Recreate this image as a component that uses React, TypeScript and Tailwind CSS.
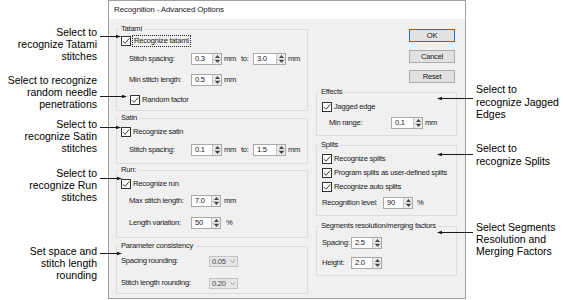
import React from 'react';

type Kids = { children?: React.ReactNode; className?: string };

function Row({ children, className = '' }: Kids) {
  return <div className={`flex items-center h-[14px] ${className}`}>{children}</div>;
}

function Group({ title, children, className = '' }: Kids & { title: string }) {
  return (
    <fieldset className={`border border-[#dcdcdc] ${className}`}>
      <legend className="ml-[2px] px-[2px] leading-[10px]">{title}</legend>
      {children}
    </fieldset>
  );
}

function Check({ label, focus }: { label: string; focus?: boolean }) {
  return (
    <div className="flex items-center">
      <span className="w-[10px] h-[10px] border border-[#333] bg-white flex items-center justify-center">
        <svg width="8" height="8" viewBox="0 0 8 8">
          <path d="M1 4.2 L3.1 6.3 L7.2 1.4" stroke="#222" strokeWidth="0.9" fill="none" />
        </svg>
      </span>
      {focus ? (
        <span className="ml-[1px] px-[1px] leading-[10px] border border-dotted border-[#222]">{label}</span>
      ) : (
        <span className="ml-[2px]">{label}</span>
      )}
    </div>
  );
}

function SpinBox({ value, className = '' }: { value: string; className?: string }) {
  return (
    <div className={`flex h-[12px] border border-[#a9a9a9] bg-white ${className}`}>
      <span className="flex-1 pl-[3px] leading-[10px]">{value}</span>
      <div className="flex flex-col w-[9px] border-l border-[#c4c4c4] bg-[#ebebeb]">
        <div className="flex-1 flex items-center justify-center border-b border-[#c4c4c4]">
          <svg width="5" height="3" viewBox="0 0 5 3">
            <path d="M0 3 L2.5 0 L5 3 Z" fill="#444" />
          </svg>
        </div>
        <div className="flex-1 flex items-center justify-center">
          <svg width="5" height="3" viewBox="0 0 5 3">
            <path d="M0 0 L2.5 3 L5 0 Z" fill="#444" />
          </svg>
        </div>
      </div>
    </div>
  );
}

function Combo({ value }: { value: string }) {
  return (
    <div className="flex items-center justify-between w-[29px] h-[11px] border border-[#c2c2c2] bg-[#e6e6e6] pl-[2px] pr-[2px] text-[#444] leading-[9px]">
      <span>{value}</span>
      <svg width="5" height="3" viewBox="0 0 5 3">
        <path d="M0.3 0.3 L2.5 2.6 L4.7 0.3" stroke="#888" strokeWidth="0.8" fill="none" />
      </svg>
    </div>
  );
}

function Btn({ label, primary, className = '' }: { label: string; primary?: boolean; className?: string }) {
  return (
    <div
      className={`w-[46px] h-[13px] flex items-center justify-center bg-[#e1e1e1] border ${
        primary ? 'border-[#0078d7]' : 'border-[#adadad]'
      } ${className}`}
    >
      {label}
    </div>
  );
}

const arrows = [
  { x1: 100, x2: 121, y: 36 },
  { x1: 100, x2: 127, y: 96 },
  { x1: 100, x2: 121, y: 127 },
  { x1: 100, x2: 122, y: 178 },
  { x1: 100, x2: 122, y: 253 },
  { x1: 473, x2: 437, y: 98 },
  { x1: 473, x2: 437, y: 154 },
  { x1: 473, x2: 437, y: 232 },
];

export default function App() {
  return (
    <div className="relative w-[563px] h-[300px] bg-white flex overflow-hidden font-['Liberation_Sans',Arial,sans-serif] text-black">
      {/* left callouts */}
      <div className="w-[108px] flex flex-col items-end pr-[11px] pt-[26px] text-[10.5px] leading-[12px] text-right">
        <p>Select to<br />recognize Tatami<br />stitches</p>
        <p className="mt-[12px]">Select to recognize<br />random needle<br />penetrations</p>
        <p className="mt-[8px]">Select to<br />recognize Satin<br />stitches</p>
        <p className="mt-[13px]">Select to<br />recognize Run<br />stitches</p>
        <p className="mt-[42px]">Set space and<br />stitch length<br />rounding</p>
      </div>

      {/* dialog */}
      <div className="w-[358px] h-[299px] border border-[#a0a0a0] bg-[#f0f0f0] flex flex-col text-[7.6px] tracking-[-0.25px] text-[#1a1a1a]">
        <div className="h-[18px] bg-white flex items-center pl-[5px] text-[8px] tracking-[-0.15px]">
          Recognition - Advanced Options
        </div>
        <div className="flex pl-[7px] pr-[8px]">
          {/* left column */}
          <div className="w-[192px] flex flex-col pt-[5px]">
            <Group title="Tatami" className="pb-[3px]">
              <Row className="pl-[4px]">
                <Check label="Recognize tatami" focus />
              </Row>
              <Row className="mt-[4px] pl-[12px]">
                <span className="w-[62px]">Stitch spacing:</span>
                <SpinBox value="0.3" className="w-[31px]" />
                <span className="ml-[2px] w-[17px]">mm</span>
                <span className="w-[12px]">to:</span>
                <SpinBox value="3.0" className="w-[33px]" />
                <span className="ml-[2px]">mm</span>
              </Row>
              <Row className="mt-[7px] pl-[12px]">
                <span className="w-[62px]">Min stitch length:</span>
                <SpinBox value="0.5" className="w-[31px]" />
                <span className="ml-[2px]">mm</span>
              </Row>
              <Row className="mt-[6px] pl-[13px]">
                <Check label="Random factor" />
              </Row>
            </Group>

            <Group title="Satin" className="mt-[2px] pb-[6px]">
              <Row className="mt-[2px] pl-[4px]">
                <Check label="Recognize satin" />
              </Row>
              <Row className="mt-[4px] pl-[12px]">
                <span className="w-[62px]">Stitch spacing:</span>
                <SpinBox value="0.1" className="w-[31px]" />
                <span className="ml-[2px] w-[17px]">mm</span>
                <span className="w-[12px]">to:</span>
                <SpinBox value="1.5" className="w-[33px]" />
                <span className="ml-[2px]">mm</span>
              </Row>
            </Group>

            <Group title="Run:" className="mt-[1px] pb-[7px]">
              <Row className="mt-[2px] pl-[4px]">
                <Check label="Recognize run" />
              </Row>
              <Row className="mt-[3px] pl-[12px]">
                <span className="w-[62px]">Max stitch length:</span>
                <SpinBox value="7.0" className="w-[30px]" />
                <span className="ml-[3px]">mm</span>
              </Row>
              <Row className="mt-[8px] pl-[12px]">
                <span className="w-[62px]">Length variation:</span>
                <SpinBox value="50" className="w-[30px]" />
                <span className="ml-[5px]">%</span>
              </Row>
            </Group>

            <Group title="Parameter consistency" className="mt-[3px] pb-[3px]">
              <Row className="mt-[3px] pl-[4px]">
                <span className="w-[88px]">Spacing rounding:</span>
                <Combo value="0.05" />
              </Row>
              <Row className="mt-[8px] pl-[4px]">
                <span className="w-[88px]">Stitch length rounding:</span>
                <Combo value="0.20" />
              </Row>
            </Group>
          </div>

          {/* right column */}
          <div className="w-[141px] ml-[8px] flex flex-col">
            <div className="flex flex-col items-end pr-[2px] pt-[10px]">
              <Btn label="OK" primary />
              <Btn label="Cancel" className="mt-[8px]" />
              <Btn label="Reset" className="mt-[7px]" />
            </div>

            <Group title="Effects" className="mt-[4px] pb-[5px]">
              <Row className="mt-[3px] pl-[5px]">
                <Check label="Jagged edge" />
              </Row>
              <Row className="mt-[2px] pl-[12px]">
                <span className="w-[62px]">Min range:</span>
                <SpinBox value="0.1" className="w-[32px]" />
                <span className="ml-[2px]">mm</span>
              </Row>
            </Group>

            <Group title="Splits" className="mt-[4px] pb-[5px]">
              <Row className="mt-[2px] pl-[5px]">
                <Check label="Recognize splits" />
              </Row>
              <Row className="pl-[5px]">
                <Check label="Program splits as user-defined splits" />
              </Row>
              <Row className="pl-[5px]">
                <Check label="Recognize auto splits" />
              </Row>
              <Row className="mt-[2px] pl-[5px]">
                <span className="w-[61px]">Recognition level:</span>
                <SpinBox value="90" className="w-[30px]" />
                <span className="ml-[4px]">%</span>
              </Row>
            </Group>

            <Group title="Segments resolution/merging factors" className="mt-[5px] pb-[5px]">
              <Row className="mt-[5px] pl-[5px]">
                <span className="w-[29px]">Spacing:</span>
                <SpinBox value="2.5" className="w-[31px]" />
              </Row>
              <Row className="mt-[6px] pl-[5px]">
                <span className="w-[29px]">Height:</span>
                <SpinBox value="2.0" className="w-[31px]" />
              </Row>
            </Group>
          </div>
        </div>
      </div>

      {/* right callouts */}
      <div className="flex-1 flex flex-col pl-[10px] pt-[83px] text-[10.5px] leading-[12.5px]">
        <p>Select to<br />recognize Jagged<br />Edges</p>
        <p className="mt-[21px] leading-[13.5px]">Select to<br />recognize Splits</p>
        <p className="mt-[52px] leading-[12px]">Select Segments<br />Resolution and<br />Merging Factors</p>
      </div>

      {/* callout arrows */}
      <svg className="absolute inset-0 pointer-events-none" width="563" height="300">
        {arrows.map((a) => {
          const d = a.x2 > a.x1 ? 1 : -1;
          const y = a.y + 0.5;
          return (
            <g key={`${a.x1}-${a.y}`}>
              <line x1={a.x1} y1={y} x2={a.x2 - d * 3} y2={y} stroke="#1a1a1a" strokeWidth="1" />
              <path d={`M${a.x2} ${y} L${a.x2 - d * 5} ${y - 1.8} L${a.x2 - d * 5} ${y + 1.8} Z`} fill="#1a1a1a" />
            </g>
          );
        })}
      </svg>
    </div>
  );
}
